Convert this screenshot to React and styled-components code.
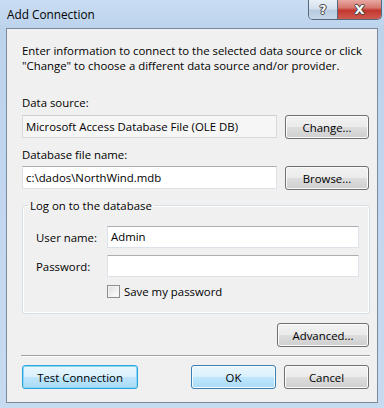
import React from 'react';
import styled, { createGlobalStyle } from 'styled-components';

const Global = createGlobalStyle`
  html, body { margin: 0; padding: 0; }
  body {
    width: 384px; height: 408px; overflow: hidden;
    font-family: "Open Sans", "Noto Sans", sans-serif;
    font-size: 11.4px; color: #000;
  }
`;

const Window = styled.div`
  width: 384px; height: 408px; box-sizing: border-box;
  display: flex; flex-direction: column;
  background: linear-gradient(180deg, #c9ddf2 0%, #bcd3ec 7%, #c3d8ef 60%, #c6daf0 100%);
`;

const TitleBar = styled.div`
  height: 28px; flex-shrink: 0;
  display: flex; align-items: flex-start;
`;

const Title = styled.div`
  padding-left: 7px; line-height: 28px; font-size: 11.8px; color: #000;
`;

const Caption = styled.div`
  margin-left: auto; margin-right: 2px;
  display: flex; height: 19px;
  border: 1px solid #56687e; border-top: none;
  border-radius: 0 0 5px 5px; overflow: hidden;
`;

const CapBtn = styled.div`
  width: ${p => p.$w}px; height: 100%;
  display: flex; align-items: center; justify-content: center;
  font-family: "DejaVu Sans", sans-serif; font-weight: bold;
  font-size: ${p => (p.$close ? 13 : 12)}px; color: #fff;
  text-shadow: 0 0 1px #333, 1px 0 0 #4a4a4a, -1px 0 0 #4a4a4a, 0 1px 0 #4a4a4a, 0 -1px 0 #4a4a4a;
  background: ${p => p.$close
    ? 'linear-gradient(180deg, #e9a9a3 0%, #d6786f 40%, #c2382f 55%, #cf5a4f 100%)'
    : 'linear-gradient(180deg, #e9f0f7 0%, #d3e0ee 45%, #b8cbe0 55%, #c6d6e7 100%)'};
  border-right: ${p => (p.$close ? 'none' : '1px solid #56687e')};
`;

const Client = styled.div`
  flex: 1;
  margin: 0 6px 5px 6px;
  border: 1px solid #7a8ba0;
  background: #f0f0f0;
  padding: 14px 8px 0 15px;
  display: flex; flex-direction: column;
`;

const Intro = styled.p`
  margin: 0; line-height: 15px; white-space: nowrap;
`;

const Label = styled.div`
  margin-top: ${p => p.$top}px;
  margin-bottom: ${p => p.$bottom}px;
  line-height: 15px;
`;

const Row = styled.div`
  display: flex; gap: 8px; align-items: flex-start;
`;

const Field = styled.div`
  flex: 1; box-sizing: border-box; height: 23px;
  padding: 0 3px; line-height: 21px; white-space: nowrap; overflow: hidden;
  background: ${p => (p.$readonly ? '#f6f6f6' : '#fff')};
  border: 1px solid ${p => (p.$readonly ? '#dadada' : '#dde2e8')};
  border-top-color: ${p => (p.$readonly ? '#cfcfcf' : '#abadb3')};
`;

const Button = styled.div`
  box-sizing: border-box; width: ${p => p.$w}px; height: 24px;
  border-radius: 3px;
  display: flex; align-items: center; justify-content: center;
  line-height: 15px; color: #000; white-space: nowrap;
  border: 1px solid ${p => (p.$focus ? '#2aa6dc' : p.$default ? '#3c7fb1' : '#707070')};
  box-shadow: inset 0 0 0 1px ${p => (p.$focus ? '#8ad6f6' : p.$default ? '#f4fbff' : '#fbfbfb')};
  background: ${p => (p.$focus || p.$default
    ? 'linear-gradient(180deg, #eaf6fd 0%, #d9f0fc 50%, #bee6fd 52%, #a9daf5 100%)'
    : 'linear-gradient(180deg, #f2f2f2 0%, #ebebeb 50%, #dddddd 52%, #cfcfcf 100%)')};
`;

const Group = styled.fieldset`
  margin: 8px -1px 0 0; padding: 0;
  border: 1px solid #d5dfe5; border-radius: 3px;
  box-shadow: inset 0 0 0 1px #ffffff;
  min-width: 0;
`;

const Legend = styled.legend`
  margin-left: 5px; padding: 0 2px; line-height: 15px;
`;

const GroupBody = styled.div`
  display: grid; grid-template-columns: 71px 1fr;
  grid-template-rows: 22px 22px 13px; row-gap: 7px;
  padding: 13px 10px 16px 13px;
`;

const RowLabel = styled.div`
  display: flex; align-items: center; line-height: 15px;
`;

const Input = styled.div`
  box-sizing: border-box; height: 22px; background: #fff;
  border: 1px solid #dde2e8; border-top-color: #abadb3;
  padding: 0 3px; line-height: 20px;
`;

const CheckRow = styled.div`
  grid-column: 2; height: 13px; margin-top: 1px;
  display: flex; align-items: center; gap: 4px;
`;

const Check = styled.span`
  width: 13px; height: 13px; box-sizing: border-box;
  border: 1px solid #8f8f8f;
  background: linear-gradient(135deg, #dcdcdc 0%, #f3f3f3 60%, #ffffff 100%);
  box-shadow: inset 0 0 0 1px #f4f4f4;
`;

const RightRow = styled.div`
  display: flex; justify-content: flex-end; margin-top: 9px;
`;

const Separator = styled.div`
  margin: 8px -1px 0 -1px; height: 1px; background: #a0a0a0;
  box-shadow: 0 1px 0 #ffffff;
`;

const BottomRow = styled.div`
  display: flex; align-items: center; gap: 8px; margin-top: 9px;
`;

const Spacer = styled.div`flex: 1;`;

export default function App() {
  return (
    <Window>
      <Global />
      <TitleBar>
        <Title>Add Connection</Title>
        <Caption>
          <CapBtn $w={28}>?</CapBtn>
          <CapBtn $w={43} $close>X</CapBtn>
        </Caption>
      </TitleBar>
      <Client>
        <Intro>
          Enter information to connect to the selected data source or click
          <br />
          "Change" to choose a different data source and/or provider.
        </Intro>
        <Label $top={22} $bottom={5}>Data source:</Label>
        <Row>
          <Field $readonly>Microsoft Access Database File (OLE DB)</Field>
          <Button $w={84}>Change...</Button>
        </Row>
        <Label $top={8} $bottom={4}>Database file name:</Label>
        <Row>
          <Field>c:\dados\NorthWind.mdb</Field>
          <Button $w={84}>Browse...</Button>
        </Row>
        <Group>
          <Legend>Log on to the database</Legend>
          <GroupBody>
            <RowLabel>User name:</RowLabel>
            <Input>Admin</Input>
            <RowLabel>Password:</RowLabel>
            <Input />
            <CheckRow>
              <Check />
              <span>Save my password</span>
            </CheckRow>
          </GroupBody>
        </Group>
        <RightRow>
          <Button $w={92}>Advanced...</Button>
        </RightRow>
        <Separator />
        <BottomRow>
          <Button $w={116} $focus>Test Connection</Button>
          <Spacer />
          <Button $w={85} $default>OK</Button>
          <Button $w={85}>Cancel</Button>
        </BottomRow>
      </Client>
    </Window>
  );
}
